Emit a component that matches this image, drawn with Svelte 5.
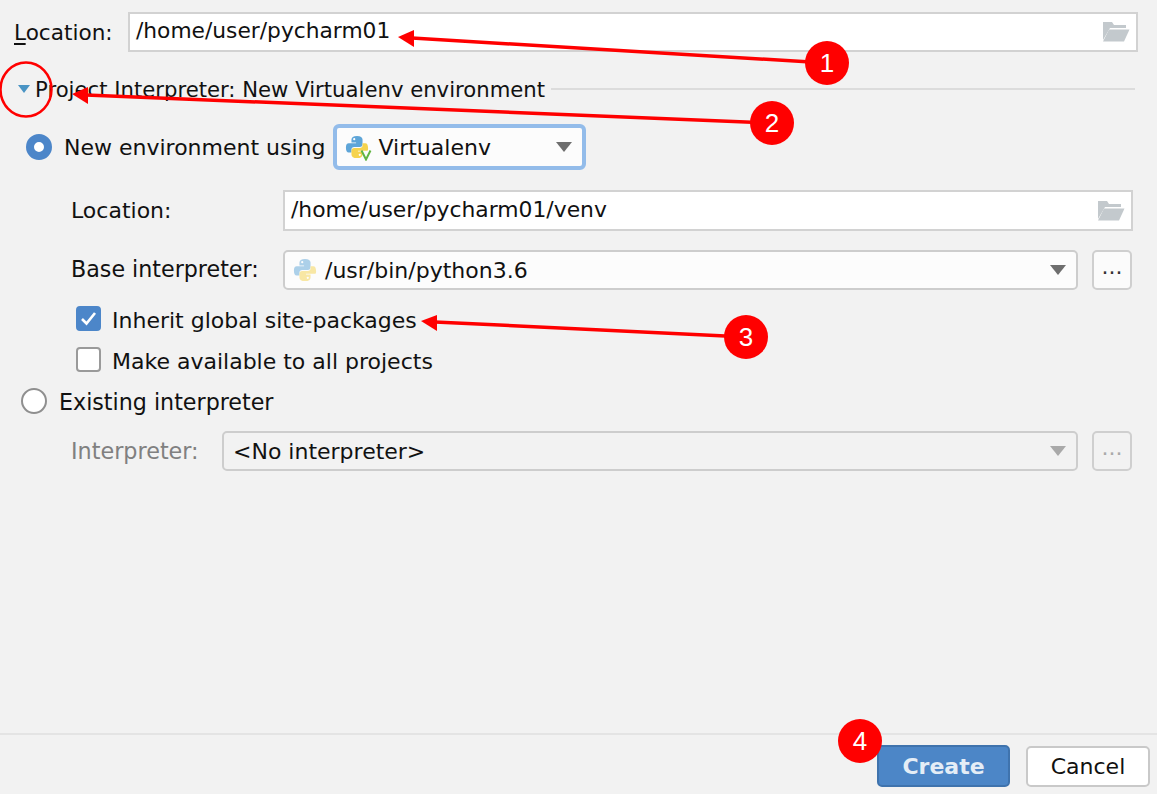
<script lang="ts">
  // New project dialog, with the numbered red callouts drawn over it
  const callouts = [
    { n: 1, cx: 827, cy: 63, tip: [398, 37], base: [[414, 30], [414, 47]] },
    { n: 2, cx: 772, cy: 123, tip: [72, 94], base: [[88, 87], [88, 104]] },
    { n: 3, cx: 746, cy: 337, tip: [421, 321], base: [[437, 315], [437, 331]] },
    { n: 4, cx: 860, cy: 741 }
  ];
</script>

{#snippet folder()}
  <svg class="folder" width="28" height="22" viewBox="0 0 28 22">
    <path d="M1 1h9l2 3h12v3H8L1 19z" fill="#c3c9cd" />
    <path d="M7 8.500h20.500L22 20.500H1z" fill="#c3c9cd" />
  </svg>
{/snippet}

{#snippet caret(color = '#6e6e6e')}
  <svg class="caret" width="16" height="10" viewBox="0 0 16 10">
    <path d="M0 0h16l-8 10z" fill={color} />
  </svg>
{/snippet}

{#snippet python(opacity = 1)}
  <svg class="py" width="24" height="24" viewBox="0 0 26 26" {opacity}>
    <path d="M7 9V5c0-2.500 2-4 6-4s6 1.500 6 4v5c0 1.500-1 3-3 3H10c-2 0-3 1-3 3v3H4c-2 0-3-2-3-5.500S2.500 9 4 9h8V8H7z" fill="#5ea5d8" />
    <path d="M19 17v4c0 2.500-2 4-6 4s-6-1.500-6-4v-1h0v-3c0-1.500 1-3 3-3h6c2 0 3-1 3-3v-2h3c2 0 3 2 3 5.500S23.500 17 22 17h-8v1h5z" fill="#f5d34e" />
    <circle cx="10" cy="4.500" r="1.200" fill="#fff" />
    <circle cx="16" cy="21.500" r="1.200" fill="#fff" />
  </svg>
{/snippet}

<div class="dialog">
  <div class="content">
    <div class="row top">
      <span class="top-label"><u>L</u>ocation:</span>
      <div class="field top-field">/home/user/pycharm01{@render folder()}</div>
    </div>

    <div class="section">
      <svg class="tri" width="12" height="8" viewBox="0 0 12 8"><path d="M0 0h12L6 8z" fill="#4a94c4" /></svg>
      <span>Project Interpreter: New Virtualenv environment</span>
      <i class="rule"></i>
    </div>

    <div class="row env">
      <span class="radio on"></span>
      <span class="env-label">New environment using</span>
      <div class="combo focus">
        <span class="py-wrap">
          {@render python()}
          <svg class="v" width="12" height="12" viewBox="0 0 12 12"><path d="M1.500 1.500 6 10.500l4.500-9" fill="none" stroke="#62b543" stroke-width="2" /></svg>
        </span>
        <span>Virtualenv</span>
        {@render caret()}
      </div>
    </div>

    <div class="sub">
      <div class="row form-row">
        <span class="label">Location:</span>
        <div class="field sub-field">/home/user/pycharm01/venv{@render folder()}</div>
      </div>
      <div class="row form-row base">
        <span class="label base-label">Base interpreter:</span>
        <div class="combo wide">
          {@render python(0.5)}
          <span>/usr/bin/python3.6</span>
          {@render caret()}
        </div>
        <button class="dots">...</button>
      </div>
      <div class="check-row first">
        <span class="check on">
          <svg width="17" height="15" viewBox="0 0 17 15"><path d="M2 8l4.500 4.500L15 2" fill="none" stroke="#fff" stroke-width="2.600" /></svg>
        </span>
        <span class="check-text">Inherit global site-packages</span>
      </div>
      <div class="check-row">
        <span class="check"></span>
        <span class="check-text">Make available to all projects</span>
      </div>
    </div>

    <div class="row existing">
      <span class="radio"></span>
      <span class="existing-text">Existing interpreter</span>
    </div>

    <div class="row disabled-row">
      <span class="dim-label">Interpreter:</span>
      <div class="combo wide dim">
        <span>&lt;No interpreter&gt;</span>
        {@render caret('#a9a9a9')}
      </div>
      <button class="dots dim-btn">...</button>
    </div>
  </div>

  <div class="footer">
    <button class="btn primary">Create</button>
    <button class="btn">Cancel</button>
  </div>

  <svg class="overlay" width="1157" height="794" viewBox="0 0 1157 794">
    <ellipse cx="26" cy="89.500" rx="25.500" ry="27" fill="none" stroke="#f00" stroke-width="2.500" />
    {#each callouts as c}
      {#if c.tip}
        <line x1={c.cx} y1={c.cy} x2={c.tip[0] + 14} y2={c.tip[1] + 1} stroke="#f00" stroke-width="3.500" />
        <polygon points="{c.tip[0]},{c.tip[1]} {c.base[0][0]},{c.base[0][1]} {c.base[1][0]},{c.base[1][1]}" fill="#f00" />
      {/if}
      <circle cx={c.cx} cy={c.cy} r="22" fill="#f00" />
      <text x={c.cx} y={c.cy + 9} text-anchor="middle" class="num">{c.n}</text>
    {/each}
  </svg>
</div>

<style>
  :global(body) { margin: 0; }
  .dialog {
    position: relative;
    width: 1157px;
    height: 794px;
    display: flex;
    flex-direction: column;
    overflow: hidden;
    background: #f2f2f2;
    color: #111;
    font-family: "DejaVu Sans", sans-serif;
    font-size: 22px;
  }
  .content { flex: 1; display: flex; flex-direction: column; padding-top: 12px; }
  .row { display: flex; align-items: center; }
  u { text-underline-offset: 3px; }

  .field {
    display: flex;
    align-items: center;
    justify-content: space-between;
    box-sizing: border-box;
    background: #fff;
    border: 2px solid #d2d2d2;
    padding: 0 6px 3px 6px;
  }
  .folder { flex: none; margin-top: 3px; }

  .top { padding-left: 14px; }
  .top-label { width: 114px; font-size: 21.6px; }
  .top-field { width: 1010px; height: 40px; font-size: 21.75px; }

  .section { display: flex; align-items: center; height: 30px; margin: 22px 22px 0 18px; font-size: 21.2px; }
  .tri { margin-right: 5px; }
  .rule { flex: 1; height: 2px; background: #dcdcdc; margin-left: 6px; }

  .radio {
    flex: none;
    box-sizing: border-box;
    width: 26px;
    height: 26px;
    border-radius: 50%;
    background: #fff;
    border: 2px solid #8f8f8f;
  }
  .radio.on { background: #fff; border: 8px solid #4c86c9; }

  .env { height: 46px; margin-top: 20px; padding-left: 26px; }
  .env-label { margin: 0 7px 0 12px; }

  .combo {
    display: flex;
    align-items: center;
    box-sizing: border-box;
    background: #fcfcfc;
    border: 2px solid #cdcdcd;
    border-radius: 5px;
  }
  .caret { margin-left: auto; flex: none; }
  .combo.focus {
    width: 253px;
    height: 46px;
    border: 4px solid #93bcea;
    border-radius: 6px;
    padding: 0 10px 0 8px;
    gap: 8px;
  }
  .py-wrap { position: relative; display: flex; align-items: center; width: 26px; height: 28px; }
  .v { position: absolute; right: -1px; bottom: 0; }
  .combo.wide { width: 795px; height: 40px; padding: 0 10px 0 8px; gap: 8px; }

  .sub { display: flex; flex-direction: column; padding-left: 71px; }
  .form-row { margin-top: 20px; }
  .form-row .label { width: 212px; }
  .sub-field { width: 850px; height: 41px; font-size: 21.85px; }
  .base { margin-top: 19px; }
  .base-label { font-size: 22.2px; padding-bottom: 2px; box-sizing: border-box; }
  .dots {
    box-sizing: border-box;
    width: 40px;
    height: 40px;
    margin-left: 14px;
    padding: 0 0 8px 0;
    background: #fbfbfb;
    border: 2px solid #cfcfcf;
    border-radius: 5px;
    font: inherit;
    color: #333;
  }

  .check-row { display: flex; align-items: center; gap: 11px; height: 25px; margin: 16px 0 0 5px; }
  .check-row.first { margin-top: 16px; }
  .check-text { padding-top: 4px; }
  .check {
    box-sizing: border-box;
    width: 25px;
    height: 25px;
    display: flex;
    align-items: center;
    justify-content: center;
    background: #fff;
    border: 2px solid #9a9a9a;
    border-radius: 4px;
  }
  .check.on { background: #4c86c9; border-color: #4c86c9; }

  .existing { margin-top: 16px; padding-left: 21px; height: 26px; gap: 12px; }
  .existing-text { font-size: 22.2px; padding-top: 2px; }
  .disabled-row { margin-top: 17px; padding-left: 71px; }
  .dim-label { width: 151px; color: #808080; font-size: 22.3px; }
  .combo.dim { width: 856px; background: #f2f2f2; padding-left: 9px; }
  .dim-btn { background: #f2f2f2; color: #aaa; }

  .footer {
    display: flex;
    justify-content: flex-end;
    align-items: flex-end;
    gap: 16px;
    height: 61px;
    padding: 0 7px 7px 0;
    box-sizing: border-box;
    border-top: 2px solid #e4e4e4;
  }
  .btn {
    box-sizing: border-box;
    width: 124px;
    height: 41px;
    background: #fff;
    border: 2px solid #c9c9c9;
    border-radius: 5px;
    font: inherit;
    color: #111;
  }
  .btn.primary {
    width: 133px;
    height: 42px;
    background: #4c86c7;
    border-color: #3f73ad;
    color: #e4edf6;
    font-weight: 700;
  }

  .overlay { position: absolute; inset: 0; pointer-events: none; }
  .num { fill: #fff; font-family: "Liberation Sans", sans-serif; font-size: 26px; }
</style>
